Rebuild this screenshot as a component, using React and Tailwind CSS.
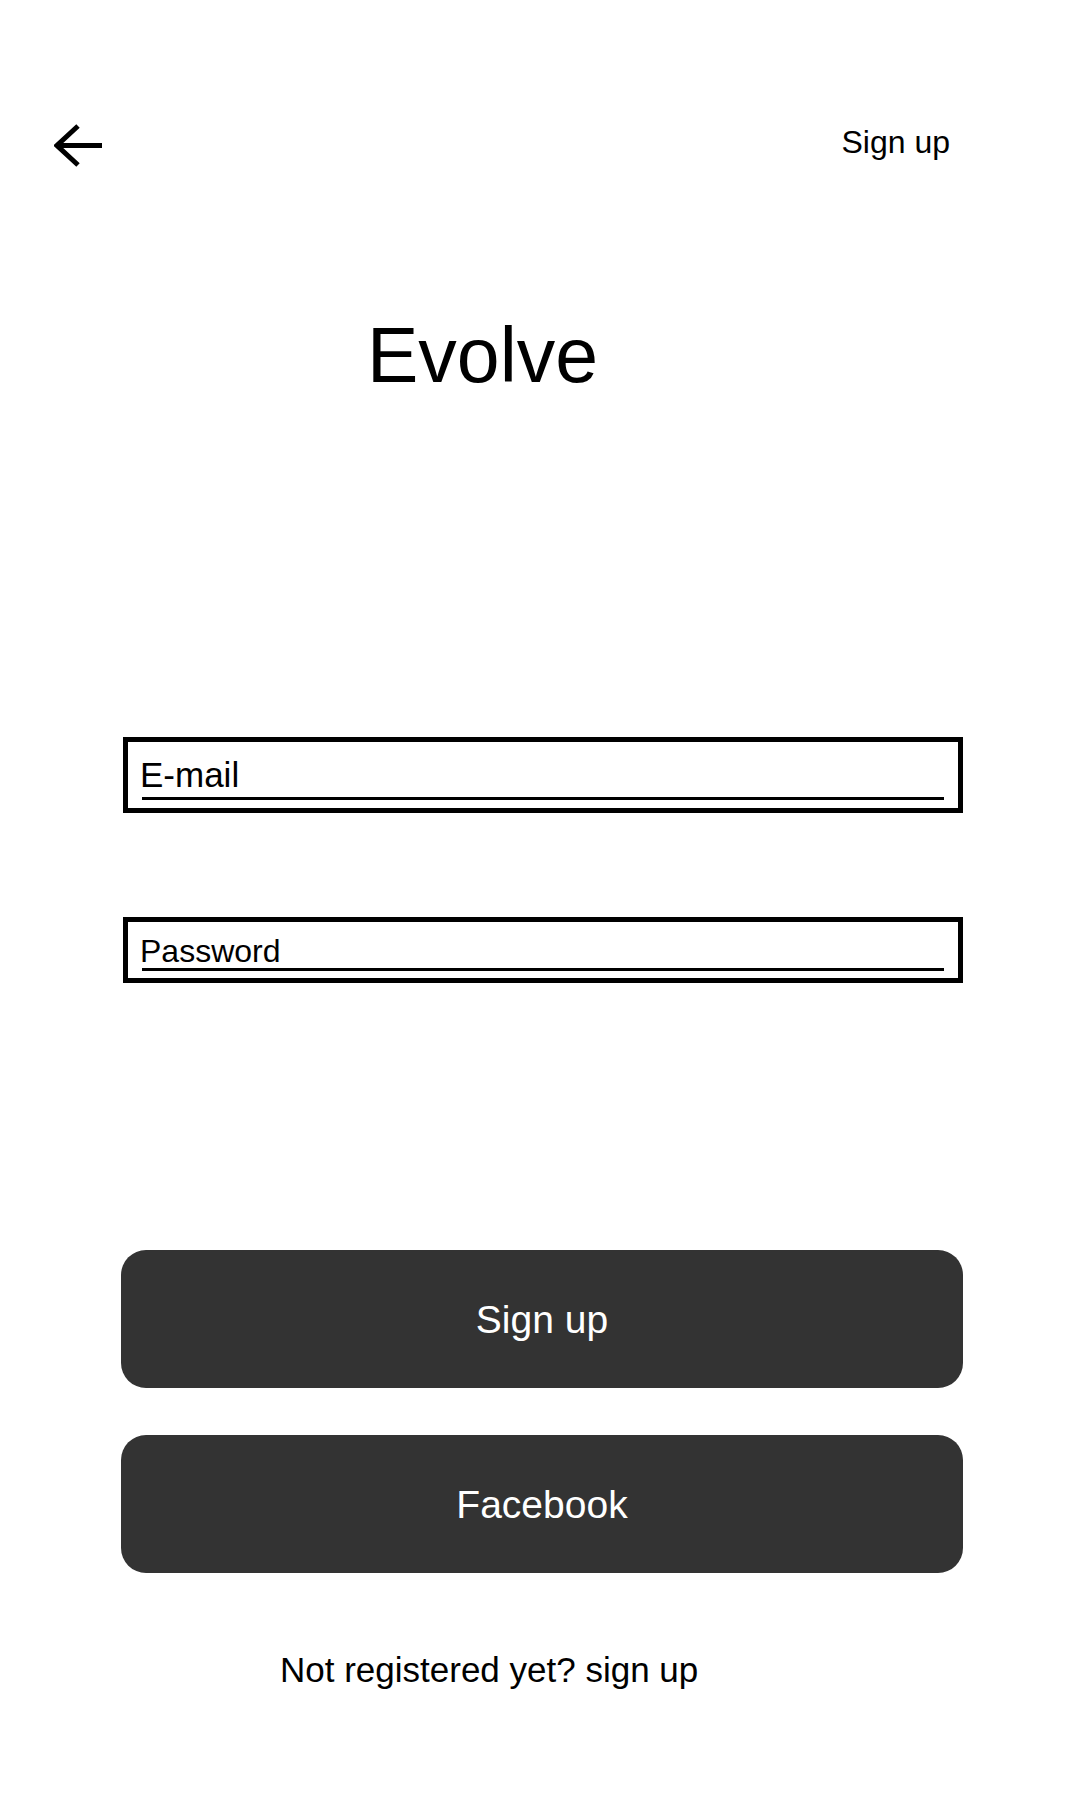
import React, { useState } from 'react';

function BackArrow() {
  return (
    <svg width="48" height="44" viewBox="0 0 48 44" fill="none" className="block">
      <path d="M24 2 L3 21.5 L24 41" stroke="#000" strokeWidth="5" strokeLinejoin="miter" />
      <path d="M3 21.5 H48" stroke="#000" strokeWidth="5" />
    </svg>
  );
}

function Field({ label, value, onChange, type, boxClass, textClass, gapClass }) {
  return (
    <div className={`ml-[123px] mr-[117px] border-[5px] border-black ${boxClass}`}>
      <input
        type={type}
        value={value}
        onChange={(e) => onChange(e.target.value)}
        placeholder={label}
        className={`block w-full bg-transparent px-[12px] leading-none text-black placeholder:text-black outline-none ${textClass}`}
      />
      <div className={`mx-[14px] h-[3px] bg-black ${gapClass}`} />
    </div>
  );
}

export default function App() {
  const [email, setEmail] = useState('');
  const [password, setPassword] = useState('');

  return (
    <div className="min-h-[1800px] w-[1080px] bg-white text-black font-['Liberation_Sans',Arial,sans-serif]">
      <div className="flex items-start justify-between pt-[124px] pl-[54px] pr-[130px]">
        <button className="block">
          <BackArrow />
        </button>
        <button className="mt-[2px] text-[32px] leading-none">Sign up</button>
      </div>

      <h1 className="mt-[149px] ml-[367px] text-[77px] leading-none font-normal">Evolve</h1>

      <div className="mt-[343px]">
        <Field
          label="E-mail"
          type="email"
          value={email}
          onChange={setEmail}
          boxClass="pt-[15px] pb-[8px]"
          textClass="h-[35px] text-[35px]"
          gapClass="mt-[5px]"
        />
      </div>

      <div className="mt-[104px]">
        <Field
          label="Password"
          type="password"
          value={password}
          onChange={setPassword}
          boxClass="pt-[13px] pb-[7px]"
          textClass="h-[32px] text-[32px]"
          gapClass="mt-[1px]"
        />
      </div>

      <div className="mt-[267px] ml-[121px] mr-[117px] flex flex-col gap-[47px]">
        <button className="flex h-[138px] items-center justify-center rounded-[25px] bg-[#333333] text-[39px] leading-none text-white">
          Sign up
        </button>
        <button className="flex h-[138px] items-center justify-center rounded-[25px] bg-[#333333] text-[39px] leading-none text-white">
          Facebook
        </button>
      </div>

      <p className="mt-[79px] ml-[280px] text-[35px] leading-none">Not registered yet? sign up</p>
    </div>
  );
}
